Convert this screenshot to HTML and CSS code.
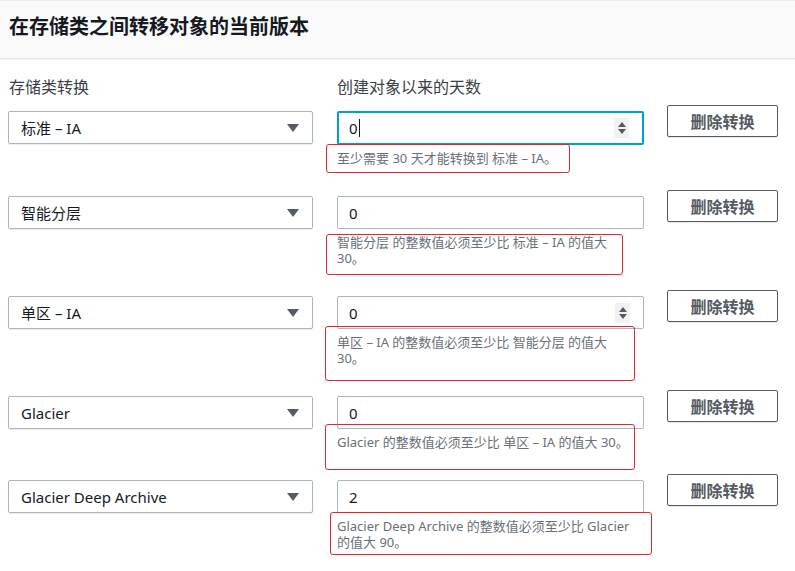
FILE: index.html
```html
<!DOCTYPE html>
<html lang="zh-CN">
<head>
    <meta charset="UTF-8">
    <title>生命周期规则</title>
    <link rel="stylesheet" href="styles.css">
</head>
<body>
    <div class="panel-header">
        <h2 class="panel-title">在存储类之间转移对象的当前版本</h2>
    </div>

    <div class="panel-body">
        <div class="labels">
            <span class="label label-class">存储类转换</span>
            <span class="label">创建对象以来的天数</span>
        </div>

        <div class="row">
            <div class="select"><span>标准 – IA</span><i class="caret"></i></div>
            <div class="days">
                <div class="input focused">0<span class="cursor"></span><span class="spin"><i class="up"></i><i class="down"></i></span></div>
                <div class="error">至少需要 30 天才能转换到 标准 – IA。<span class="mark mark-1"></span></div>
            </div>
            <button class="btn">删除转换</button>
        </div>

        <div class="row">
            <div class="select"><span>智能分层</span><i class="caret"></i></div>
            <div class="days">
                <div class="input">0</div>
                <div class="error">智能分层 的整数值必须至少比 标准 – IA 的值大 30。<span class="mark mark-2"></span></div>
            </div>
            <button class="btn">删除转换</button>
        </div>

        <div class="row">
            <div class="select"><span>单区 – IA</span><i class="caret"></i></div>
            <div class="days">
                <div class="input">0<span class="spin"><i class="up"></i><i class="down"></i></span></div>
                <div class="error">单区 – IA 的整数值必须至少比 智能分层 的值大 30。<span class="mark mark-3"></span></div>
            </div>
            <button class="btn">删除转换</button>
        </div>

        <div class="row">
            <div class="select"><span>Glacier</span><i class="caret"></i></div>
            <div class="days">
                <div class="input">0</div>
                <div class="error">Glacier 的整数值必须至少比 单区 – IA 的值大 30。<span class="mark mark-4"></span></div>
            </div>
            <button class="btn">删除转换</button>
        </div>

        <div class="row">
            <div class="select"><span>Glacier Deep Archive</span><i class="caret"></i></div>
            <div class="days">
                <div class="input">2</div>
                <div class="error">Glacier Deep Archive 的整数值必须至少比 Glacier 的值大 90。<span class="mark mark-5"></span></div>
            </div>
            <button class="btn">删除转换</button>
        </div>
    </div>
</body>
</html>
```

FILE: styles.css
```css
* {
    margin: 0;
    padding: 0;
    box-sizing: border-box;
}

body {
    background: #fff;
    font-family: "Noto Sans", "Noto Sans CJK SC", sans-serif;
    color: #16191f;
    overflow: hidden;
}

.panel-header {
    height: 59px;
    background: #fafafa;
    border-top: 1px solid #eaeded;
    border-bottom: 1px solid #e3e6e6;
    box-shadow: 0 1px 1px rgba(0, 0, 0, 0.04);
    display: flex;
    align-items: center;
    padding: 0 9px 9px;
}

.panel-title {
    font-size: 20px;
    font-weight: bold;
    color: #16191f;
}

.panel-body {
    padding: 0 8px;
}

.labels {
    display: flex;
    margin-top: 18px;
    height: 20px;
    line-height: 20px;
}

.label {
    font-size: 16px;
    color: #3b4048;
}

.label-class {
    width: 329px;
    padding-left: 1px;
}

.row {
    display: flex;
    align-items: flex-start;
    margin-top: 8px;
    margin-bottom: 24px;
}

.select {
    width: 305px;
    height: 33px;
    margin-top: 6px;
    margin-right: 24px;
    border: 1px solid #aab7b8;
    border-radius: 2px;
    box-shadow: 0 1px 1px rgba(0, 0, 0, 0.08);
    display: flex;
    align-items: center;
    justify-content: space-between;
    padding: 0 13px 0 12px;
    font-size: 15px;
    color: #16191f;
}

.caret {
    width: 0;
    height: 0;
    border-left: 6px solid transparent;
    border-right: 6px solid transparent;
    border-top: 8px solid #545b64;
}

.days {
    width: 307px;
    margin-right: 23px;
}

.input {
    position: relative;
    height: 33px;
    margin-top: 6px;
    border: 1px solid #aab7b8;
    border-radius: 2px;
    display: flex;
    align-items: center;
    padding-left: 11px;
    font-size: 15px;
    color: #16191f;
}

.input.focused {
    height: 34px;
    border: 2px solid #00a1c9;
    padding-left: 10px;
}

.cursor {
    display: inline-block;
    width: 1px;
    height: 18px;
    background: #16191f;
    margin-left: 1px;
}

.spin {
    position: absolute;
    right: 13px;
    top: 50%;
    transform: translateY(-50%);
    width: 15px;
    height: 20px;
    background: #f1f1f1;
    display: flex;
    flex-direction: column;
    align-items: center;
    justify-content: center;
    gap: 2px;
}

.spin .up,
.spin .down {
    width: 0;
    height: 0;
    border-left: 4px solid transparent;
    border-right: 4px solid transparent;
}

.spin .up {
    border-bottom: 5px solid #545b64;
}

.spin .down {
    border-top: 5px solid #545b64;
}

.error {
    position: relative;
    width: 296px;
    margin-top: 5px;
    font-size: 13px;
    line-height: 16px;
    color: #687078;
}

/* red review marks drawn over the messages */
.mark {
    position: absolute;
    border: 1.5px solid #e3262b;
    border-radius: 3px;
}

.mark-1 { left: -11px; top: -6px; width: 244px; height: 29px; }
.mark-2 { left: -11px; top: 0; width: 297px; height: 41px; }
.mark-3 { left: -12px; top: -8px; width: 310px; height: 55px; }
.mark-4 { left: -12px; top: -10px; width: 310px; height: 46px; }
.mark-5 { left: -7px; top: -6px; width: 322px; height: 43px; }

.btn {
    width: 111px;
    height: 32px;
    background: #fff;
    border: 1px solid #545b64;
    border-radius: 2px;
    box-shadow: 0 1px 1px rgba(0, 0, 0, 0.1);
    font-family: inherit;
    font-size: 16px;
    font-weight: bold;
    color: #545b64;
    cursor: pointer;
}
```
